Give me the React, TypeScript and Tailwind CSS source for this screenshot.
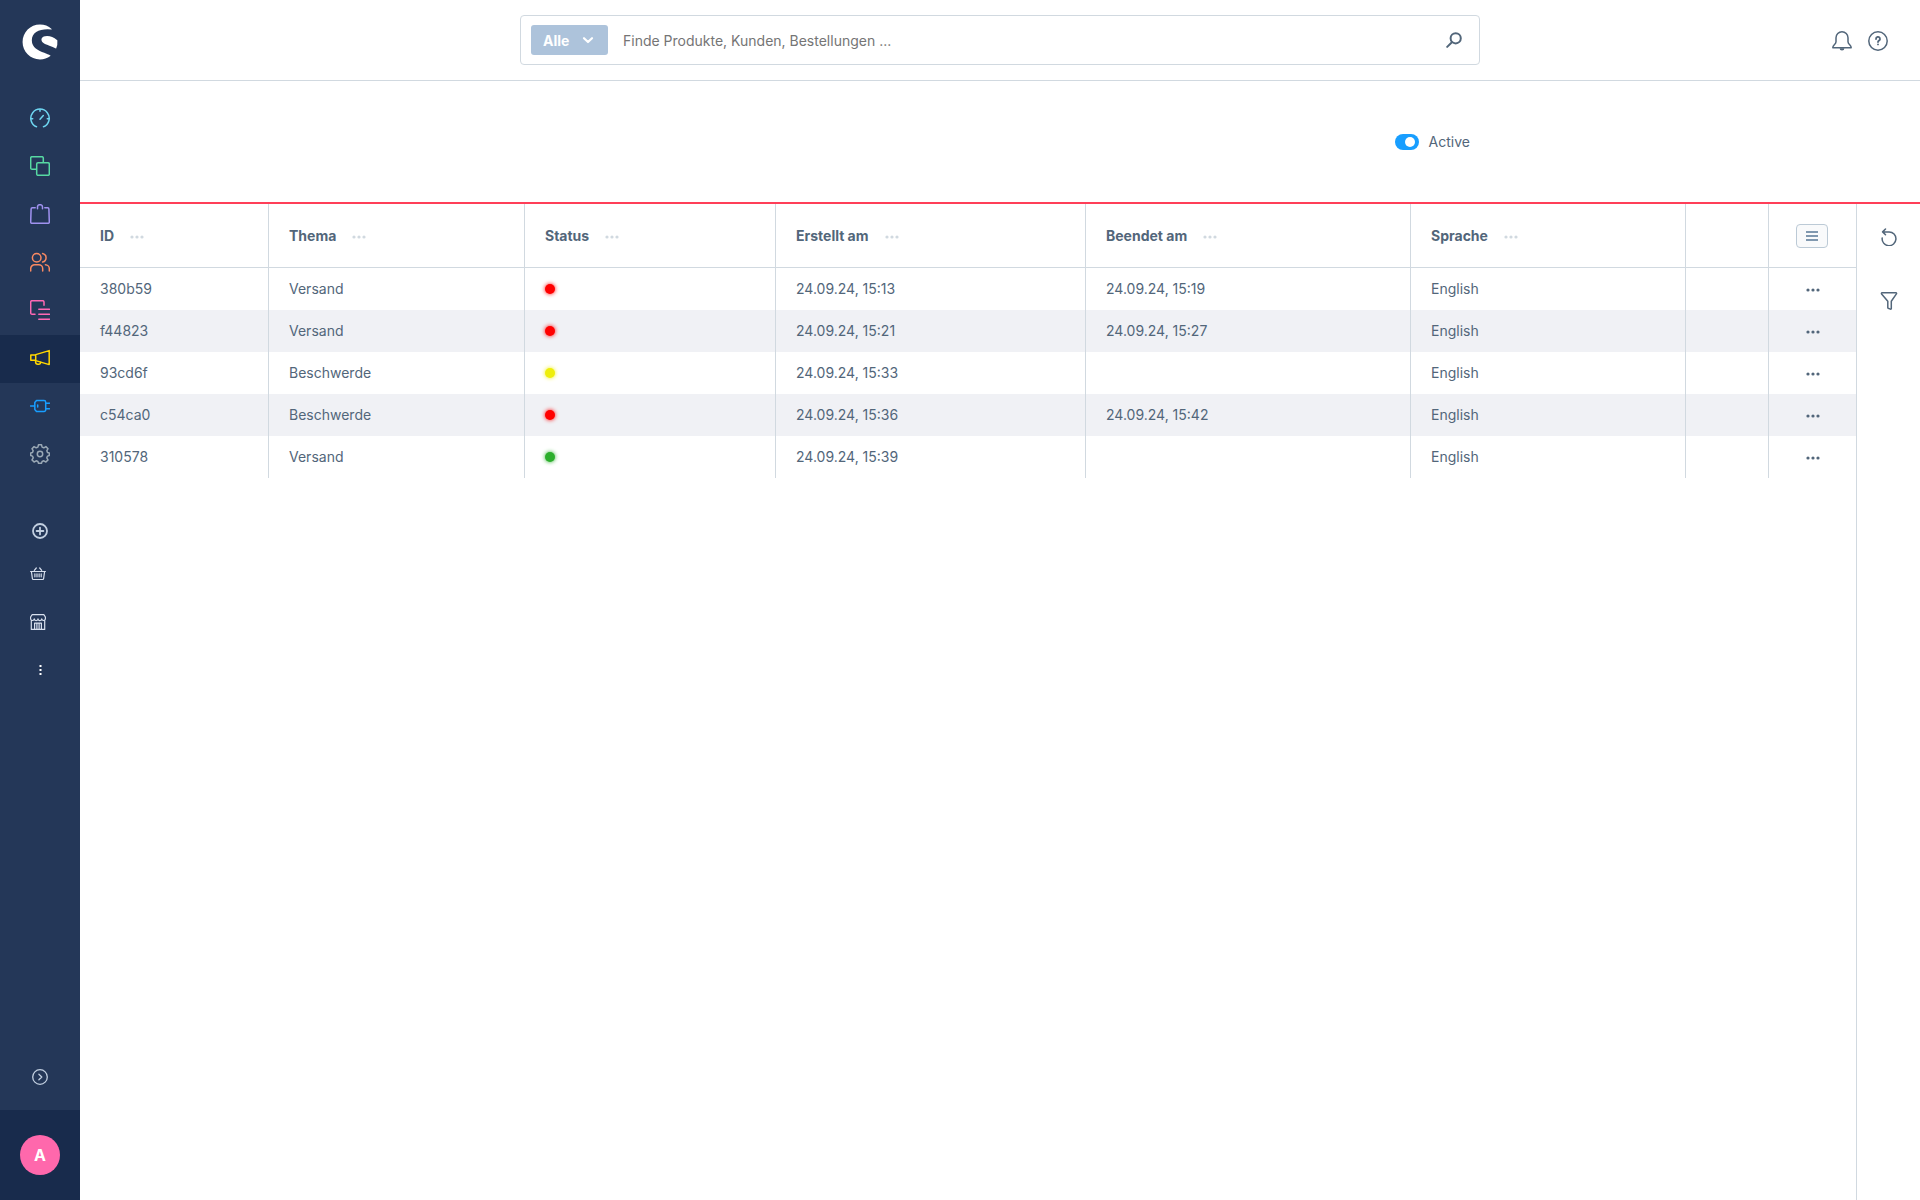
import type { ReactNode } from 'react';
import { FaShopware } from 'react-icons/fa';

const menuItems = [
  {
    name: 'Dashboard',
    color: 'text-[#6ed5f0]',
    icon: (
      <>
        <path d="M6.5 18.8A9.2 9.2 0 1 1 13.5 18.8" />
        <path d="M10 11.2 13.3 7.6M10 1.5v1.8M.9 10.8h1.8M17.3 10.8h1.8" />
      </>
    ),
  },
  {
    name: 'Kataloge',
    color: 'text-[#57d9a3]',
    icon: (
      <>
        <path d="M6 13.2H2A1.3 1.3 0 0 1 .7 11.9V2A1.3 1.3 0 0 1 2 .7h10A1.3 1.3 0 0 1 13.3 2v4" />
        <rect x="6.7" y="6.7" width="12.6" height="12.6" rx="1.3" />
      </>
    ),
  },
  {
    name: 'Bestellungen',
    color: 'text-[#a092f0]',
    icon: (
      <>
        <path d="M5.2 3.7H2.3A1.2 1.2 0 0 0 1.1 4.9L.7 18a1.2 1.2 0 0 0 1.2 1.3h16.2a1.2 1.2 0 0 0 1.2-1.3l-.4-13.1a1.2 1.2 0 0 0-1.2-1.2h-2.9" />
        <path d="M7.5 4.8V2.9A2.2 2.2 0 0 1 9.7.7h.6a2.2 2.2 0 0 1 2.2 2.2v1.9" />
      </>
    ),
  },
  {
    name: 'Kunden',
    color: 'text-[#f88962]',
    icon: (
      <>
        <circle cx="6.7" cy="5.7" r="4.3" />
        <path d="M.7 18.9v-2.2a4 4 0 0 1 4-4h4a4 4 0 0 1 4 4v2.2M12.6 1.4a4.4 4.4 0 0 1 0 8.6M15.4 12.8a4 4 0 0 1 3.9 4v2.1" />
      </>
    ),
  },
  {
    name: 'Inhalte',
    color: 'text-[#ff68b4]',
    icon: (
      <path d="M5 14.3H2A1.3 1.3 0 0 1 .7 13V2A1.3 1.3 0 0 1 2 .7h10.7A1.3 1.3 0 0 1 14 2v3.2M8.8 9.3h10.7M8.8 14.3h10.7M8.8 19.2h10.7" />
    ),
  },
  {
    name: 'Marketing',
    color: 'text-[#ffd700]',
    active: true,
    icon: (
      <>
        <path d="M5.7 6.6 19.2 2.6v14L5.7 12.6zM5.7 7H.8v5.2h4.9" />
        <path d="M5.6 12.8v1.3a2.2 2.2 0 0 0 2.2 2.2h.8a2 2 0 0 0 2-2" />
      </>
    ),
  },
  {
    name: 'Erweiterungen',
    color: 'text-[#189eff]',
    icon: (
      <path d="M.5 10h4.3M15.7 7.2h3.8M15.7 12.8h3.8M7.7 9v2M6.5 4.6h7.6a1.6 1.6 0 0 1 1.6 1.6v7.6a1.6 1.6 0 0 1-1.6 1.6H6.5l-1.7-1.9v-7z" />
    ),
  },
  {
    name: 'Einstellungen',
    color: 'text-[#9aa8b5]',
    icon: (
      <>
        <circle cx="10" cy="10" r="2.7" />
        <path d="M8.5.8h3l.6 2.3 1.7.7 2.1-1.2 2.1 2.1-1.2 2.1.7 1.7 1.8.5v2.5l-1.8.6-.7 1.7 1.2 2.1-2.1 2.1-2.1-1.2-1.7.7-.6 1.8h-3l-.6-1.8-1.7-.7-2.1 1.2L2 15.9l1.2-2.1-.7-1.7-1.8-.6V9l1.8-.5.7-1.7L2 4.7l2.1-2.1 2.1 1.2 1.7-.7z" />
      </>
    ),
  },
];

const columns = ['ID', 'Thema', 'Status', 'Erstellt am', 'Beendet am', 'Sprache'];

const tickets = [
  { id: '380b59', topic: 'Versand', status: 'closed', created: '24.09.24, 15:13', ended: '24.09.24, 15:19', language: 'English' },
  { id: 'f44823', topic: 'Versand', status: 'closed', created: '24.09.24, 15:21', ended: '24.09.24, 15:27', language: 'English' },
  { id: '93cd6f', topic: 'Beschwerde', status: 'waiting', created: '24.09.24, 15:33', ended: '', language: 'English' },
  { id: 'c54ca0', topic: 'Beschwerde', status: 'closed', created: '24.09.24, 15:36', ended: '24.09.24, 15:42', language: 'English' },
  { id: '310578', topic: 'Versand', status: 'open', created: '24.09.24, 15:39', ended: '', language: 'English' },
];

const statusColors: Record<string, string> = {
  closed: 'bg-[#ff0000] shadow-[0_0_4px_#ff0000]',
  waiting: 'bg-[#eeee0a] shadow-[0_0_4px_#eeee0a]',
  open: 'bg-[#2bae2b] shadow-[0_0_4px_#2bae2b]',
};

function Icon({ size = 20, width = 1.5, children }: { size?: number; width?: number; children: ReactNode }) {
  return (
    <svg
      width={size}
      height={size}
      viewBox={`0 0 ${size} ${size}`}
      fill="none"
      stroke="currentColor"
      strokeWidth={width}
      strokeLinecap="round"
      strokeLinejoin="round"
      aria-hidden="true"
    >
      {children}
    </svg>
  );
}

function Dots() {
  return (
    <svg width="14" height="4" viewBox="0 0 14 4" fill="currentColor" aria-hidden="true">
      <circle cx="2" cy="2" r="1.6" />
      <circle cx="7" cy="2" r="1.6" />
      <circle cx="12" cy="2" r="1.6" />
    </svg>
  );
}

function Sidebar() {
  return (
    <aside className="flex w-20 shrink-0 flex-col bg-[#243758]">
      <a href="#" aria-label="Shopware" className="flex h-[95px] items-start justify-center pt-6 text-white">
        <FaShopware size={36} />
      </a>
      <nav className="flex flex-col">
        {menuItems.map((item) => (
          <a
            key={item.name}
            href="#"
            aria-label={item.name}
            className={`flex h-12 items-center justify-center pb-0.5 ${item.color} ${item.active ? 'bg-[#182b4c]' : ''}`}
          >
            <Icon>{item.icon}</Icon>
          </a>
        ))}
      </nav>
      <div className="mt-8 flex flex-col text-[#d8e0ee]">
        <button type="button" aria-label="Verkaufskanal hinzufügen" className="flex h-10 items-center justify-center text-[#c2cfe0]">
          <Icon size={16} width={1.8}>
            <circle cx="8" cy="8" r="7" />
            <path d="M8 4.6v6.8M4.6 8h6.8" />
          </Icon>
        </button>
        <a href="#" aria-label="Headless" className="flex h-12 items-center justify-center pr-1 pb-0.5">
          <Icon size={16} width={1.2}>
            <path d="M.6 5.5h14.8M1.4 5.5l1 7.1a1 1 0 0 0 1 .9h9.2a1 1 0 0 0 1-.9l1-7.1M4.3 4.3 6.3 2M11.7 4.3 9.7 2M4.9 7.8v3M7 7.8v3M9.1 7.8v3M11.2 7.8v3" />
          </Icon>
        </a>
        <a href="#" aria-label="Storefront" className="flex h-12 items-center justify-center pr-1 pb-0.5">
          <Icon size={16} width={1.2}>
            <path d="M2.2.6h11.6L15.4 3v1.5a1.8 1.8 0 0 1-3.7.3 1.85 1.85 0 0 1-3.7 0 1.85 1.85 0 0 1-3.7 0A1.8 1.8 0 0 1 .6 4.5V3zM1.3 6.2v9.2h13.4V6.2M4.6 15.4V9.2h6.8v6.2M6.9 9.2v6.2M9.1 9.2v6.2" />
          </Icon>
        </a>
        <button type="button" aria-label="Mehr" className="flex h-12 items-center justify-center pb-0.5 text-white">
          <svg width="12" height="12" viewBox="0 0 12 12" fill="currentColor" aria-hidden="true">
            <path d="M5.5 1h2v2h-2zM5.5 5h2v2h-2zM5.5 9h2v2h-2z" />
          </svg>
        </button>
      </div>
      <div className="mt-auto">
        <button type="button" aria-label="Menü ausklappen" className="flex h-[66px] w-full items-center justify-center text-[#c2cfe0]">
          <Icon size={16} width={1.3}>
            <circle cx="8" cy="8" r="7.3" />
            <path d="m6.9 5.2 2.9 2.8-2.9 2.8" />
          </Icon>
        </button>
        <div className="flex h-[90px] items-center justify-center bg-[#182b4c]">
          <button type="button" aria-label="Benutzerkonto" className="size-10 rounded-full bg-[#ff68ac] text-base font-bold text-white">
            A
          </button>
        </div>
      </div>
    </aside>
  );
}

function SearchBar() {
  return (
    <header className="grid h-[81px] grid-cols-[1fr_minmax(0,960px)_1fr] items-center border-b border-[#d1d9e0]">
      <form role="search" className="col-start-2 flex h-[50px] items-center rounded border border-[#d1d9e0] px-2.5">
        <div className="relative flex h-[30px] w-[77px] shrink-0 items-center rounded-[3px] bg-[#adc3db] text-white">
          <select aria-label="Suchbereich" className="h-full w-full appearance-none pt-0.5 pl-3 font-bold outline-none">
            <option>Alle</option>
          </select>
          <span className="pointer-events-none absolute right-3.5">
            <Icon size={12} width={2.2}>
              <path d="M2 4.2 6 8l4-3.8" />
            </Icon>
          </span>
        </div>
        <input
          type="text"
          aria-label="Suche"
          placeholder="Finde Produkte, Kunden, Bestellungen ..."
          className="h-full min-w-0 flex-1 pl-[15px] outline-none placeholder:text-[#757575]"
        />
        <button type="submit" aria-label="Suchen" className="flex h-8 w-[30px] items-center justify-center">
          <Icon size={16} width={2}>
            <circle cx="9.7" cy="6.3" r="5.1" />
            <path d="M5.9 10.2 1.2 14.9" />
          </Icon>
        </button>
      </form>
      <div className="flex items-center justify-end gap-4 pt-0.5 pr-8">
        <button type="button" aria-label="Benachrichtigungen">
          <Icon>
            <path d="M10 .8a6 6 0 0 0-6 6v3.9c0 1.3-.7 2.1-1.7 3.1-1 1-1.5 1.6-1.5 2.9h18.4c0-1.3-.5-1.9-1.5-2.9-1-1-1.7-1.8-1.7-3.1V6.800a6 6 0 0 0-6-6z" />
            <path d="M7.6 17.2a2.4 2.4 0 0 0 4.8 0z" fill="currentColor" stroke="none" />
          </Icon>
        </button>
        <button type="button" aria-label="Hilfe">
          <Icon>
            <circle cx="10" cy="10" r="9.2" />
            <path d="M8 8a2 2 0 1 1 3 1.6c-.6.4-1 .7-1 1.4M10 13.3v.1" strokeWidth="1.8" />
          </Icon>
        </button>
      </div>
    </header>
  );
}

export default function App() {
  return (
    <div className="flex min-h-screen bg-white font-['Inter',sans-serif] text-sm text-[#52667a]">
      <Sidebar />
      <div className="flex min-w-0 flex-1 flex-col">
        <SearchBar />
        <div className="border-b-2 border-[#ff3f58]">
          <div className="mx-auto flex h-[121px] max-w-[940px] items-center justify-end">
            <label className="flex items-center gap-2.5">
              <input type="checkbox" role="switch" defaultChecked className="peer sr-only" />
              <span className="flex h-4 w-6 items-center justify-start rounded-full bg-[#a3b1bf] px-1 peer-checked:justify-end peer-checked:bg-[#189eff]">
                <span className="size-2.5 rounded-full bg-white" />
              </span>
              Active
            </label>
          </div>
        </div>
        <main className="flex flex-1">
          <div className="min-w-0 flex-1">
            <table className="w-full table-fixed border-separate border-spacing-0 text-left">
              <colgroup>
                <col className="w-[189px]" />
                <col className="w-[256px]" />
                <col className="w-[251px]" />
                <col className="w-[310px]" />
                <col className="w-[325px]" />
                <col className="w-[275px]" />
                <col className="w-[83px]" />
                <col className="w-[87px]" />
              </colgroup>
              <thead>
                <tr className="h-16">
                  {columns.map((column) => (
                    <th key={column} className="border-r border-b border-[#d1d9e0] px-5 font-bold">
                      <div className="flex items-center gap-4">
                        {column}
                        <button type="button" aria-label={`${column} Optionen`} className="pt-0.5 text-[#d1d9e0]">
                          <Dots />
                        </button>
                      </div>
                    </th>
                  ))}
                  <th className="border-r border-b border-[#d1d9e0]" />
                  <th className="border-b border-[#d1d9e0] pr-0.5">
                    <button
                      type="button"
                      aria-label="Spalten anpassen"
                      className="mx-auto flex h-6 w-8 items-center justify-center rounded border border-[#bccad6] bg-[#f9fafb] text-[#8098af]"
                    >
                      <svg width="12" height="10" viewBox="0 0 12 10" fill="currentColor" aria-hidden="true">
                        <path d="M0 0h12v2H0zM0 4h12v2H0zM0 8h12v2H0z" />
                      </svg>
                    </button>
                  </th>
                </tr>
              </thead>
              <tbody>
                {tickets.map((ticket) => (
                  <tr key={ticket.id} className="h-[42px] even:bg-[#f0f1f5]">
                    <td className="border-r border-[#d1d9e0] px-5">{ticket.id}</td>
                    <td className="border-r border-[#d1d9e0] px-5">{ticket.topic}</td>
                    <td className="border-r border-[#d1d9e0] px-5">
                      <span className={`block size-2.5 rounded-full ${statusColors[ticket.status]}`} />
                    </td>
                    <td className="border-r border-[#d1d9e0] px-5">{ticket.created}</td>
                    <td className="border-r border-[#d1d9e0] px-5">{ticket.ended}</td>
                    <td className="border-r border-[#d1d9e0] px-5">{ticket.language}</td>
                    <td className="border-r border-[#d1d9e0]" />
                    <td className="pt-0.5">
                      <button type="button" aria-label={`Aktionen ${ticket.id}`} className="flex h-5 w-full items-center justify-center">
                        <Dots />
                      </button>
                    </td>
                  </tr>
                ))}
              </tbody>
            </table>
          </div>
          <aside className="flex w-16 shrink-0 flex-col border-l border-[#d1d9e0]">
            <button type="button" aria-label="Aktualisieren" className="flex h-16 items-center justify-center pt-0.5">
              <Icon size={18}>
                <path d="M2.2 9.9A6.9 6.9 0 1 0 9.1 3.9H2.8M5.5 1 2.6 3.9l2.9 2.9" />
              </Icon>
            </button>
            <button type="button" aria-label="Filter" className="flex h-16 items-center justify-center pt-0.5">
              <Icon size={18}>
                <path d="M2 .8h14c.6 0 .7.6.4 1.1L11.3 9.2v7.4c0 .5-.5.7-.9.5l-2.2-.8c-.3-.1-.4-.3-.4-.6V9.200L1.6 1.900C1.3 1.400 1.400.8 2 .8z" />
              </Icon>
            </button>
          </aside>
        </main>
      </div>
    </div>
  );
}
